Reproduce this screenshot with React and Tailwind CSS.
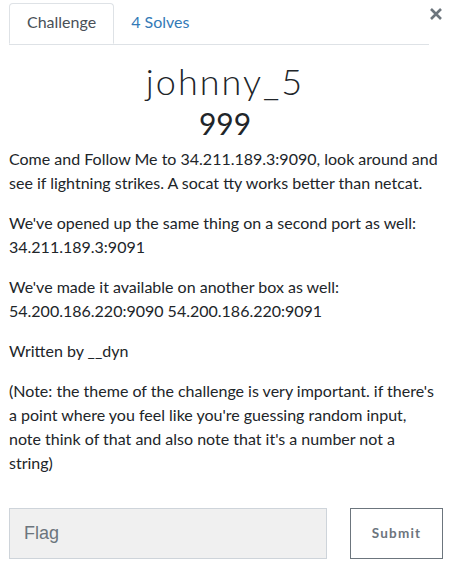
export default function App() {
  const lato = { fontFamily: 'Lato, "Open Sans", sans-serif' };
  return (
    <div className="w-[450px] h-[564px] bg-white text-[#212529] relative overflow-hidden" style={lato}>
      <button className="absolute left-[428px] top-[2px] text-[24px] leading-none font-bold text-[#6c757d]">
        <svg width="14" height="14" viewBox="0 0 14 14" className="mt-[5px] ml-[1px]"><path d="M2 2L12 12M12 2L2 12" stroke="#6c757d" strokeWidth="2.6" /></svg>
      </button>
      <div className="pl-[9px] pr-[21px] pt-[3px]">
        <div className="flex border-b border-[#dee2e6]">
          <div className="h-[41px] -mb-px px-[17px] pb-[3px] flex items-center text-[16px] text-[#495057] bg-white border border-[#dee2e6] border-b-white rounded-t-[4px]">Challenge</div>
          <div className="h-[41px] px-[17px] pb-[3px] flex items-center text-[16px] text-[#337ab7]">4 Solves</div>
        </div>
      </div>
      <div className="pl-[9px]">
        <h2 className="text-center pr-[9px] text-[36px] leading-[40px] font-light tracking-[2px] mt-[16px] text-[#212529]">johnny_5</h2>
        <h3 className="text-center pr-[9px] text-[30px] leading-[36px] font-normal mt-[4px] text-[#212529]">999</h3>
        <div className="mt-[6px] pr-[9px] text-[16px] leading-[24px]">
          <p className="mb-4">Come and Follow Me to 34.211.189.3:9090, look around and see if lightning strikes. A socat tty works better than netcat.</p>
          <p className="mb-4">We've opened up the same thing on a second port as well: 34.211.189.3:9091</p>
          <p className="mb-4">We've made it available on another box as well: 54.200.186.220:9090 54.200.186.220:9091</p>
          <p className="mb-4">Written by __dyn</p>
          <p className="mb-4">(Note: the theme of the challenge is very important. if there's a point where you feel like you're guessing random input, note think of that and also note that it's a number not a string)</p>
        </div>
        <div className="flex mt-[33px] gap-[23px]">
          <div className="w-[318px] shrink-0 h-[51px] bg-[#f0f0f0] border border-[#ced4da] flex items-center pl-[14px] text-[18px] text-[#6c757d]" style={{ fontFamily: '"Liberation Sans", Arial, sans-serif' }}>Flag</div>
          <div className="w-[93px] shrink-0 h-[51px] border border-[#6c757d] flex items-center justify-center text-[13.5px] font-bold tracking-[1.2px] text-[#6c757d]">Submit</div>
        </div>
      </div>
    </div>
  );
}
